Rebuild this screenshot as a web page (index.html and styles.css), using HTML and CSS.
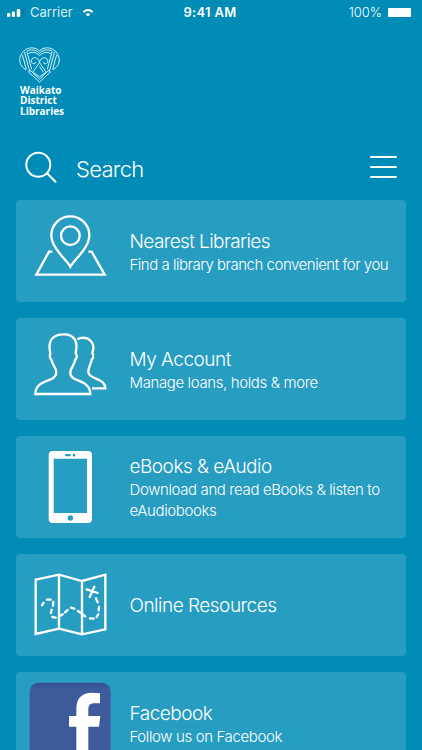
FILE: index.html
```html
<!DOCTYPE html>
<html lang="en">
<head>
    <meta charset="UTF-8">
    <meta name="viewport" content="width=device-width, initial-scale=1.0">
    <title>Waikato District Libraries</title>
    <link rel="stylesheet" href="styles.css">
</head>
<body>
    <div class="status-bar">
        <div class="carrier">
            <svg width="18" height="12" viewBox="0 0 18 12" fill="#fff">
                <rect x="0" y="7" width="3.2" height="4" rx="1"/>
                <rect x="4.8" y="5.5" width="3.2" height="5.5" rx="1"/>
                <rect x="9.8" y="3" width="3.4" height="8" rx="1"/>
                <rect x="14.5" y="1" width="3" height="10" rx="1" fill="#007da5"/>
            </svg>
            <span class="carrier-name">Carrier</span>
            <svg width="14" height="12" viewBox="0 0 14 12" fill="none">
                <path d="M1 4.2Q7-1.2 13 4.2" stroke="#007da5" stroke-width="1.6"/>
                <path d="M2.4 6Q7 1.9 11.6 6" stroke="#fff" stroke-width="2"/>
                <path d="M4.6 8.2Q7 6.3 9.4 8.2L7 10.6Z" fill="#fff"/>
            </svg>
        </div>
        <span class="time">9:41 AM</span>
        <div class="power">
            <span>100%</span>
            <div class="battery"></div>
        </div>
    </div>

    <header class="brand">
        <svg class="heart" width="41" height="36" viewBox="0 0 42 37">
            <path d="M21 4C17-.2 9-.3 4.500 4.500C-.8 10-.2 17 4 21L7 23.500"/>
            <path d="M21 4C25-.2 33-.3 37.500 4.500C42.800 10 42.200 17 38 21L35 23.500"/>
            <path d="M21 6.500C17.500 2.700 12 2 8 4.300M21 9C17.500 5.200 13 4.500 9.500 6.800"/>
            <path d="M21 6.500C24.500 2.700 30 2 34 4.300M21 9C24.500 5.200 29 4.500 32.500 6.800"/>
            <path d="M5.500 5L11 25.500M3.300 8L7.500 23M8 4.500L13 23M36.500 5L31 25.500M38.700 8L34.500 23M34 4.500L29 23"/>
            <path d="M9 25L21 36L33 25M11 23.500L21 33L31 23.500"/>
            <path d="M21 16L28 26L21 30.500L14 26ZM21 20L25 26"/>
            <path d="M21 16C20 10 13.500 9.500 12.500 14C12 17.500 17 18.500 17 15.500M21 16C22 10 28.500 9.500 29.500 14C30 17.500 25 18.500 25 15.500"/>
        </svg>
        <div class="brand-name">Waikato<br>District<br>Libraries</div>
    </header>

    <div class="search-bar">
        <svg width="34" height="34" viewBox="0 0 34 34" fill="none" stroke="#fff" stroke-width="2" stroke-linecap="round">
            <circle cx="13.300" cy="13.700" r="12"/>
            <path d="M22 22.200L30.500 30.700"/>
        </svg>
        <span class="search-label">Search</span>
        <div class="menu">
            <i></i>
            <i></i>
            <i></i>
        </div>
    </div>

    <main class="cards">
        <div class="card nearest">
            <svg class="icon" viewBox="18 15 330 306">
                <path d="M181 215C170 194 124 160 124 121A57 57 0 0 1 238 121C238 160 192 194 181 215Z"/>
                <circle cx="181" cy="122" r="28"/>
                <path d="M127 170H117L79 239H284L245 170H235"/>
            </svg>
            <div class="card-text">
                <h2>Nearest Libraries</h2>
                <p>Find a library branch convenient for you</p>
            </div>
        </div>

        <div class="card">
            <svg class="icon" viewBox="18 9 330 306">
                <path d="M76 237H241C241 211 220 202 198 194C184 188 180 181 181 171C183 157 194 148 195 136C202 128 200 119 197 114C205 82 194 58 162 58C127 58 112 78 121 114C118 122 120 130 125 136C127 150 138 157 139 171C139 181 134 189 120 194C96 203 76 211 76 237Z"/>
                <path d="M202 73C210 67 229 66 238 74C253 84 252 99 247 114C252 121 249 130 245 134C243 148 236 155 235 168C234 180 243 184 256 190C276 198 286 204 286 220H246"/>
            </svg>
            <div class="card-text">
                <h2>My Account</h2>
                <p>Manage loans, holds &amp; more</p>
            </div>
        </div>

        <div class="card">
            <svg class="icon" viewBox="18 9 330 306">
                <path class="solid" fill-rule="evenodd" d="M128 54H234Q246 54 246 66V257Q246 270 234 270H128Q116 270 116 257V66Q116 54 128 54ZM131 77V240H231V77ZM169 63Q165 63 165 66.500T169 70H178Q182 70 182 66.500T178 63ZM192 62.500A4 4 0 0 0 192 70.500A4 4 0 0 0 192 62.500ZM181 247A8 8 0 0 0 181 263A8 8 0 0 0 181 247Z"/>
            </svg>
            <div class="card-text">
                <h2>eBooks &amp; eAudio</h2>
                <p>Download and read eBooks &amp; listen to<br>eAudiobooks</p>
            </div>
        </div>

        <div class="card">
            <svg class="icon" viewBox="18 12 330 306">
                <path d="M77 89L147 74L216 93L286 74V238L216 253L147 236L77 252ZM147 74V236M216 93V253"/>
                <path class="trail" d="M96 166L101 158M111 149L122 149M130 156L129 167M125 179L123 189M127 201L137 203M150 198L158 193M165 187L173 180M183 173L193 176M204 183L226 199M240 205L251 206M260 201L265 193M266 181L267 171M263 157L258 145M230 118L263 129M253 110L239 141"/>
            </svg>
            <div class="card-text">
                <h2>Online Resources</h2>
            </div>
        </div>

        <div class="card">
            <svg class="icon" viewBox="18 21 330 306">
                <defs>
                    <linearGradient id="fb" x1="0" y1="0" x2="0" y2="1">
                        <stop offset="0" stop-color="#355091"/>
                        <stop offset=".08" stop-color="#3d5a9a"/>
                        <stop offset="1" stop-color="#3d5a9a"/>
                    </linearGradient>
                </defs>
                <rect class="fb-tile" x="59" y="53" width="243" height="243" rx="27" fill="url(#fb)"/>
                <path class="solid" d="M199 296V185H177V153H199V131C199 98 218 83 245 83Q260 83 270 85V115H254C240 115 235 121 235 134V153H271L267 185H235V296Z"/>
            </svg>
            <div class="card-text">
                <h2>Facebook</h2>
                <p>Follow us on Facebook</p>
            </div>
        </div>
    </main>
</body>
</html>
```
FILE: styles.css
```css
* {
    box-sizing: border-box;
}
body {
    margin: 0;
    height: 750px;
    overflow: hidden;
    background-color: #008cb7;
    color: #fff;
    font-family: Inter, "Liberation Sans", sans-serif;
    font-weight: 300;
}
svg {
    display: block;
    flex-shrink: 0;
}
.status-bar {
    display: grid;
    grid-template-columns: 1fr auto 1fr;
    align-items: center;
    height: 24px;
    padding: 0 11px 0 7px;
    font-size: 13px;
    line-height: 24px;
}
.carrier {
    display: flex;
    align-items: center;
}
.carrier-name {
    margin: 0 8px 0 5px;
    font-weight: 400;
    opacity: 0.85;
}
.time {
    padding-left: 2px;
    font-weight: 600;
    letter-spacing: 0.3px;
}
.power {
    display: flex;
    align-items: center;
    justify-content: flex-end;
    gap: 6px;
}
.battery {
    width: 23px;
    height: 9px;
    background-color: #fff;
    border-radius: 1px;
}
.brand {
    height: 118px;
    padding: 23px 0 0 19px;
}
.heart {
    fill: none;
    stroke: #d8f4ff;
    stroke-width: 1;
}
.brand-name {
    margin: 2px 0 0 1px;
    font-family: "Open Sans", sans-serif;
    font-size: 10px;
    font-weight: 700;
    line-height: 10.4px;
}
.search-bar {
    display: flex;
    align-items: center;
    height: 58px;
    padding: 0 25px 6px 25px;
}
.search-label {
    margin: 1px 0 0 17px;
    font-size: 22px;
    letter-spacing: -0.7px;
}
.menu {
    display: flex;
    flex-direction: column;
    gap: 8px;
    width: 27px;
    margin: 0 0 2px auto;
}
.menu i {
    height: 2px;
    background-color: #fff;
    border-radius: 1px;
}
.cards {
    display: flex;
    flex-direction: column;
    gap: 16px;
    padding: 0 16px 0 15.5px;
}
.card {
    display: flex;
    align-items: center;
    height: 102px;
    flex-shrink: 0;
    overflow: hidden;
    background-color: #279dc1;
    border-radius: 4px;
}
.icon {
    width: 110px;
    height: 102px;
    fill: none;
    stroke: #fff;
    stroke-width: 7;
}
.icon .solid {
    fill: #fff;
    stroke: none;
}
.icon .trail {
    stroke-linecap: round;
}
.icon .fb-tile {
    stroke: none;
}
.card-text {
    padding-left: 4px;
    white-space: nowrap;
}
.card-text h2 {
    margin: 0;
    padding-top: 2px;
    font-size: 19px;
    font-weight: 300;
    line-height: 24px;
    letter-spacing: -0.5px;
}
.card-text p {
    margin: 0;
    font-size: 15px;
    line-height: 21px;
    letter-spacing: -0.38px;
}
.nearest h2 {
    letter-spacing: -0.6px;
}
.nearest p {
    letter-spacing: -0.48px;
}
```
